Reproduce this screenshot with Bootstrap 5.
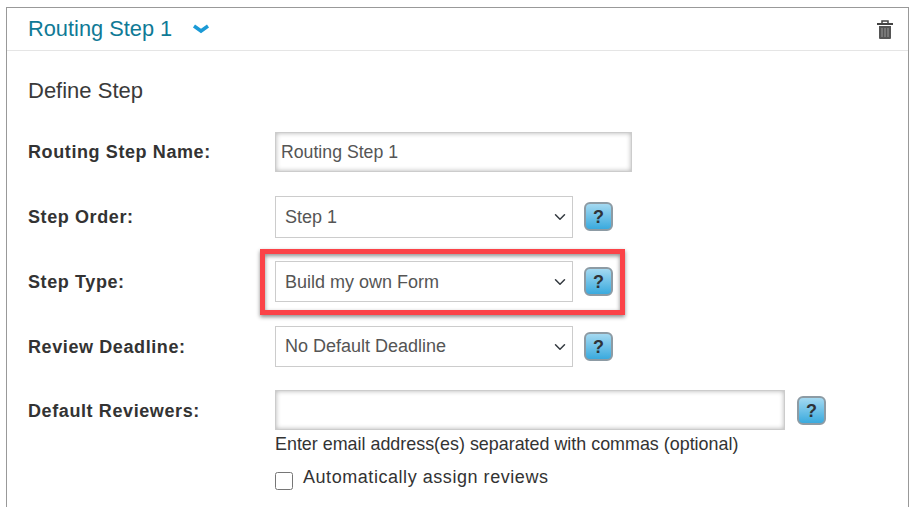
<!DOCTYPE html>
<html lang="en">
<head>
    <meta charset="UTF-8">
    <meta name="viewport" content="width=device-width, initial-scale=1.0">
    <title>Routing Step</title>
    <link href="https://cdn.jsdelivr.net/npm/bootstrap@5.3.0/dist/css/bootstrap.min.css" rel="stylesheet">
    <style>
        html, body {
            height: 507px;
            overflow: hidden;
        }
        body {
            background-color: #fff;
            color: #333;
            font-family: "Liberation Sans", Arial, sans-serif;
            font-size: 18px;
            padding: 7px 8px 0 6px;
        }
        .step-panel {
            border: 1px solid #999;
            border-bottom: 0;
            height: 520px;
        }
        .step-head {
            height: 43px;
            padding: 0 15px 0 21px;
            border-bottom: 1px solid #e5e5e5;
        }
        .step-title {
            color: #0f7a96;
            font-size: 21.8px;
            line-height: 1;
        }
        .step-toggle {
            margin-left: 19px;
        }
        .step-body {
            padding: 0 21px;
        }
        .step-sub {
            font-size: 22px;
            line-height: 24px;
            margin: 28px 0 29px;
            color: #3a3a3a;
        }
        .field-row {
            display: flex;
            align-items: flex-start;
            position: relative;
            margin-bottom: 24px;
        }
        .field-row.row-tight {
            margin-bottom: 23px;
        }
        .field-row.row-last {
            margin-bottom: 0;
        }
        .field-label {
            width: 247px;
            height: 41px;
            flex: none;
            font-weight: 700;
            font-size: 18px;
            letter-spacing: .6px;
            line-height: 41px;
            padding-top: 1px;
            margin: 0;
            color: #333;
        }
        .row-name .field-label {
            padding-top: 0;
        }
        .text-box {
            height: 40px;
            border: 1px solid #ccc;
            box-shadow: inset 0 0 5px rgba(0, 0, 0, .3);
            padding: 0 5px;
            color: #555;
            font-size: 17.7px;
            border-radius: 0;
            outline: 0;
        }
        .name-box {
            width: 357px;
        }
        .reviewers-box {
            width: 510px;
        }
        .pick-box {
            width: 298px;
            height: 41px;
            border: 1px solid #ccc;
            border-radius: 0;
            padding: 0 30px 0 9px;
            color: #555;
            font-size: 18px;
            background-position: right 4px center;
        }
        .pick-box.pick-tall {
            height: 42px;
        }
        .pick-box.pick-low {
            padding-top: 1px;
        }
        .help-btn {
            width: 29px;
            height: 29px;
            flex: none;
            padding: 0;
            margin: 6px 0 0 11px;
            border: 2px solid #8d9ba4;
            border-radius: 6px;
            background: linear-gradient(#a4d9f1, #3aaade);
            color: #2e3338;
            font-weight: 700;
            font-size: 18px;
            line-height: 24px;
            text-align: center;
        }
        .reviewers-box + .help-btn {
            margin-left: 12px;
        }
        .note-box {
            position: absolute;
            left: 232px;
            top: -12px;
            width: 365px;
            height: 66px;
            border: 5px solid #fb4348;
            box-shadow: 0 2px 4px rgba(0, 0, 0, .45), inset 0 2px 4px rgba(0, 0, 0, .45);
            pointer-events: none;
        }
        .hint-text {
            font-size: 17.9px;
            line-height: 24px;
            margin: 1px 0 0 247px;
            color: #333;
        }
        .auto-check {
            display: flex;
            align-items: flex-start;
            margin: 9px 0 0 247px;
            font-size: 18px;
            letter-spacing: .55px;
            line-height: 24px;
            color: #333;
        }
        .auto-check input {
            width: 18px;
            height: 18px;
            margin: 7px 10px 0 0;
            border: 1px solid #767676;
            border-radius: 3px;
            flex: none;
        }
    </style>
</head>
<body>
    <div class="step-panel">
        <div class="step-head d-flex align-items-center justify-content-between">
            <div class="d-flex align-items-center">
                <span class="step-title">Routing Step 1</span>
                <svg class="step-toggle" width="20" height="12" viewBox="0 0 20 12" aria-hidden="true">
                    <path d="M3 3l7 5 7-5" fill="none" stroke="#1b9ad6" stroke-width="3.5"/>
                </svg>
            </div>
            <svg width="16" height="19" viewBox="0 0 16 19" aria-hidden="true">
                <path d="M5 3V1h6v2" fill="none" stroke="#444" stroke-width="1.5"/>
                <rect x="0" y="3" width="16" height="2" fill="#444"/>
                <path d="M2 6h12v12a1 1 0 0 1-1 1H3a1 1 0 0 1-1-1z" fill="#555"/>
                <path d="M5 8v9M8 8v9M11 8v9" stroke="#999" stroke-width="1"/>
            </svg>
        </div>
        <div class="step-body">
            <div class="step-sub">Define Step</div>
            <div class="field-row row-tight row-name">
                <label class="field-label">Routing Step Name:</label>
                <input class="text-box name-box" type="text" value="Routing Step 1">
            </div>
            <div class="field-row row-tight">
                <label class="field-label">Step Order:</label>
                <select class="form-select pick-box pick-tall"><option>Step 1</option></select>
                <button class="help-btn" type="button">?</button>
            </div>
            <div class="field-row">
                <label class="field-label">Step Type:</label>
                <select class="form-select pick-box pick-low"><option>Build my own Form</option></select>
                <button class="help-btn" type="button">?</button>
                <div class="note-box"></div>
            </div>
            <div class="field-row row-tight">
                <label class="field-label">Review Deadline:</label>
                <select class="form-select pick-box"><option>No Default Deadline</option></select>
                <button class="help-btn" type="button">?</button>
            </div>
            <div class="field-row row-last">
                <label class="field-label">Default Reviewers:</label>
                <input class="text-box reviewers-box" type="text">
                <button class="help-btn" type="button">?</button>
            </div>
            <div class="hint-text">Enter email address(es) separated with commas (optional)</div>
            <label class="auto-check"><input type="checkbox">Automatically assign reviews</label>
        </div>
    </div>
    <script src="https://cdn.jsdelivr.net/npm/bootstrap@5.3.0/dist/js/bootstrap.bundle.min.js"></script>
</body>
</html>
